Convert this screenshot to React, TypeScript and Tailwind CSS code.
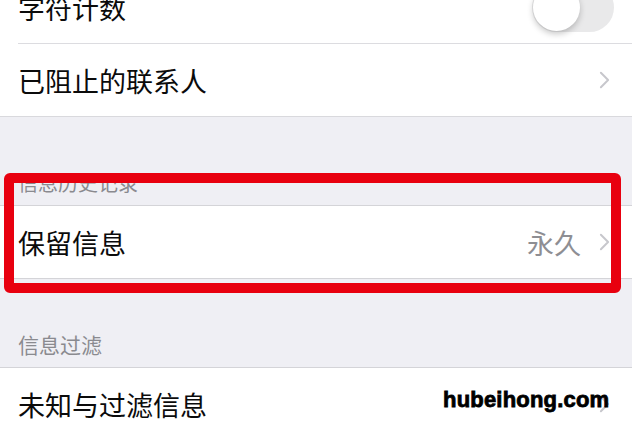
import React from "react";

const FONT = { fontFamily: '"Noto Sans CJK SC", "Noto Sans", sans-serif' };

function Chevron({ className = "" }: { className?: string }) {
  return (
    <svg
      viewBox="0 0 12 20"
      className={`h-[18px] w-[11px] flex-none ${className}`}
      fill="none"
      stroke="#c7c7cc"
      strokeWidth={2.2}
      strokeLinecap="round"
      strokeLinejoin="round"
    >
      <polyline points="2,2 10,10 2,18" />
    </svg>
  );
}

function Toggle() {
  return (
    <div className="relative h-[49px] w-[82px] rounded-full bg-[#e9e9ea]">
      <div className="absolute left-[1px] top-[1px] h-[47px] w-[47px] rounded-full bg-white shadow-[0_3px_6px_rgba(0,0,0,0.22)]" />
    </div>
  );
}

function Row({
  label,
  value,
  right,
  divider,
}: {
  label: string;
  value?: string;
  right?: React.ReactNode;
  divider?: boolean;
}) {
  return (
    <div className="flex h-[72px] items-stretch bg-white pl-[18px]">
      <div
        className={`flex flex-1 items-center justify-between pr-[22px] ${
          divider ? "border-b border-[#dcdce0]" : ""
        }`}
      >
        <span className="text-[27px] leading-none text-[#0b0b0b]">{label}</span>
        <div className="flex items-center gap-[18px]">
          {value && (
            <span className="text-[27px] leading-none text-[#8e8e93]">{value}</span>
          )}
          {right ?? <Chevron />}
        </div>
      </div>
    </div>
  );
}

function SectionHeader({ title, size }: { title: string; size: string }) {
  return (
    <div className="flex h-[88px] items-end bg-[#efeff4] pb-[12px] pl-[18px]">
      <span className={`${size} leading-none text-[#8a8a8f]`}>{title}</span>
    </div>
  );
}

export default function App() {
  return (
    <div
      className="relative h-[423px] w-[632px] overflow-hidden bg-[#efeff4]"
      style={FONT}
    >
      <div className="-mt-[28px]">
        <Row
          label="字符计数"
          divider
          right={
            <div className="-mr-[4px]">
              <Toggle />
            </div>
          }
        />
        <div className="border-b border-[#d9d9dd]">
          <Row label="已阻止的联系人" />
        </div>

        <div className="border-b border-[#d4d4d8]">
          <SectionHeader title="信息历史记录" size="text-[20px]" />
        </div>
        <div className="border-b border-[#d4d4d8]">
          <Row label="保留信息" value="永久" />
        </div>

        <div className="border-b border-[#d4d4d8]">
          <SectionHeader title="信息过滤" size="text-[21px]" />
        </div>
        <Row label="未知与过滤信息" />
      </div>

      {/* red highlight */}
      <div className="absolute left-[4px] top-[173px] h-[120px] w-[617px] rounded-[6px] border-[10px] border-[#e8000f]" />

      {/* watermark */}
      <div
        className="absolute left-[443px] top-[389px] text-[22px] font-bold leading-none tracking-[0.2px] text-black [-webkit-text-stroke:0.8px_black]"
        style={{ fontFamily: '"Liberation Sans", Arial, sans-serif' }}
      >
        hubeihong.com
      </div>
    </div>
  );
}
